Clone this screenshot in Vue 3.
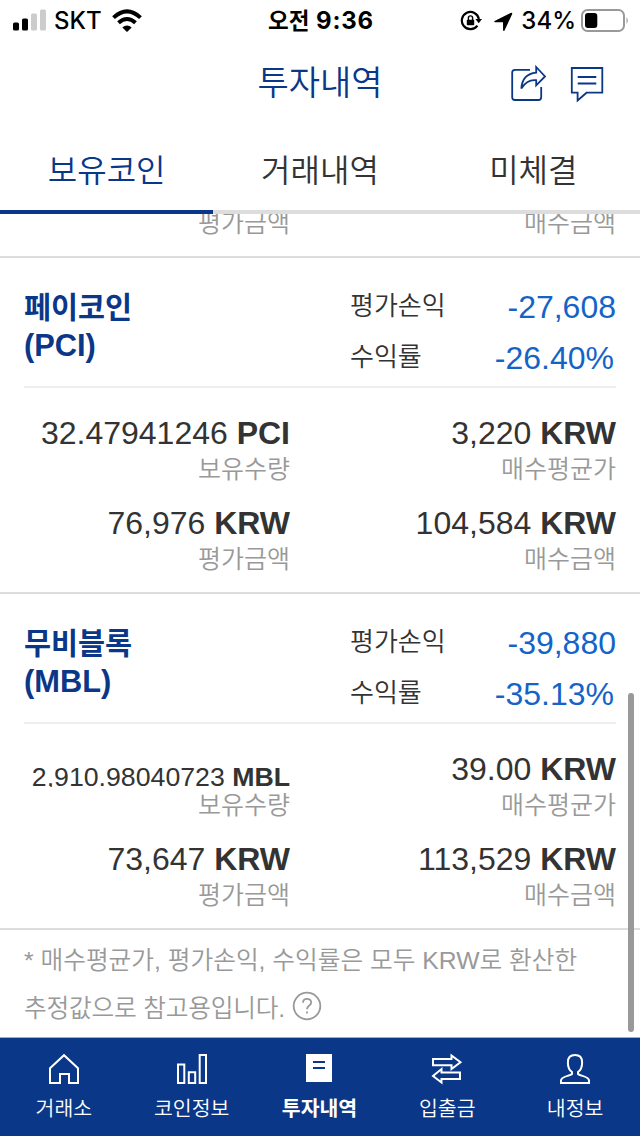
<template>
  <div class="app">
    <div class="status">
      <div class="status-left">
        <svg width="36" height="24" viewBox="0 0 36 24">
          <rect x="0" y="13.5" width="6" height="8" rx="1.5" />
          <rect x="9" y="9.5" width="6" height="12" rx="1.5" />
          <rect class="off" x="18" y="4.5" width="6" height="17" rx="1.5" />
          <rect class="off" x="27" y="0.5" width="6" height="21" rx="1.5" />
        </svg>
        <span class="carrier">SKT</span>
        <svg class="wifi" width="30" height="24" viewBox="0 0 30 24">
          <path d="M1.5 8.6 Q15 -3.8 28.5 8.6" />
          <path d="M6.5 13.8 Q15 6.2 23.5 13.8" />
          <path class="solid" d="M15 23 L10.3 18.5 Q15 14.7 19.7 18.5 Z" />
        </svg>
      </div>
      <div class="time"><span class="ampm">오전</span> 9:36</div>
      <div class="status-right">
        <svg class="lock" width="22" height="22" viewBox="0 0 22 22">
          <path class="ring" d="M17.4 15.6 A8.6 8.6 0 1 1 18.9 9" />
          <path d="M15.4 9 H22 L18.7 13.2 Z" />
          <rect x="6.8" y="9.7" width="7.4" height="5.6" rx="0.8" />
          <path class="shackle" d="M8.4 10 V8 A2.1 2.1 0 0 1 12.6 8 V10" />
        </svg>
        <svg class="arrow" width="20" height="20" viewBox="0 0 20 20">
          <path d="M18.6 0.8 Q19.6 1 19.1 2.2 L11.4 18.8 Q10.4 19.6 10.1 18.3 L10 10.3 H2 Q0.5 10 1.6 9 L17.6 1 Z" />
        </svg>
        <span class="percent">34%</span>
        <svg class="battery" width="48" height="24" viewBox="0 0 48 24">
          <rect class="case" x="1" y="2" width="42" height="21" rx="5.5" />
          <rect x="4" y="5" width="12.3" height="15" rx="3" />
          <path class="tip" d="M45.5 9 Q48 12.5 45.5 16 Z" />
        </svg>
      </div>
    </div>

    <header class="header">
      <h1>투자내역</h1>
      <div class="actions">
        <svg width="40" height="40" viewBox="0 0 40 40">
          <path d="M22 5.8 H7 Q4.2 5.8 4.2 8.6 V33.2 Q4.2 36 7 36 H30.4 Q33.2 36 33.2 33.2 V23" />
          <path d="M28.2 3 L37 12.5 L28.2 21.3 V16.2 C21 15.4 17 18.5 13.3 24.5 C14 15 19.5 9.4 28.2 8.6 Z" />
        </svg>
        <svg width="40" height="40" viewBox="0 0 40 40">
          <path d="M3.8 4 H34.3 V28.7 H18.5 L9.6 36.5 V28.7 H3.8 Z" />
          <path d="M9.7 13 H28.3 M9.7 19.5 H28.3" />
        </svg>
      </div>
    </header>

    <nav class="tabs">
      <div
        v-for="(tab, i) in tabs"
        :key="tab"
        class="tab"
        :class="{ active: activeTab === i }"
        @click="activeTab = i"
      >
        {{ tab }}
      </div>
    </nav>

    <main class="list">
      <div class="peek">
        <div class="label">평가금액</div>
        <div class="label">매수금액</div>
      </div>

      <section v-for="coin in coins" :key="coin.symbol" class="coin">
        <div class="summary">
          <div class="name">
            {{ coin.name }}<br /><span class="symbol">({{ coin.symbol }})</span>
          </div>
          <div class="profit">
            <div class="line">
              <span>평가손익</span><strong>{{ coin.profit }}</strong>
            </div>
            <div class="line rate">
              <span>수익률</span><strong>{{ coin.rate }}</strong>
            </div>
          </div>
        </div>
        <div class="details">
          <div v-for="item in coin.items" :key="item.label">
            <div class="value" :class="{ small: item.value.length > 12 }">
              {{ item.value }} <b>{{ item.unit }}</b>
            </div>
            <div class="label">{{ item.label }}</div>
          </div>
        </div>
      </section>

      <p class="note">
        * 매수평균가, 평가손익, 수익률은 모두 KRW로 환산한<br />
        <span class="second">추정값으로 참고용입니다.</span>
        <svg width="30" height="30" viewBox="0 0 30 30">
          <circle cx="15" cy="15" r="13.3" />
          <path d="M11 11.8 C11 6.6 19.2 6.6 19.2 11.4 C19.2 14.5 15 14.6 15 18.2" />
          <path d="M15 20.6 V22.6" />
        </svg>
      </p>
      <div class="scrollbar"></div>
    </main>

    <footer class="bottom">
      <div class="menu">
        <svg width="32" height="32" viewBox="0 0 32 32">
          <path d="M2 30 V15.2 L16 2.2 L30 15.2 V30 H21 V21 H12 V30 Z" />
        </svg>
        <span>거래소</span>
      </div>
      <div class="menu">
        <svg width="32" height="32" viewBox="0 0 32 32">
          <path d="M2 11.5 H8.3 V30 H2 Z M12.8 19.3 H19.2 V30 H12.8 Z M23.7 2 H30 V30 H23.7 Z" />
        </svg>
        <span>코인정보</span>
      </div>
      <div class="menu active">
        <svg width="32" height="32" viewBox="0 0 32 32">
          <rect x="3" y="1" width="26" height="28" />
          <path d="M10 9 H22 M10 15 H22" />
        </svg>
        <span>투자내역</span>
      </div>
      <div class="menu">
        <svg width="32" height="32" viewBox="0 0 32 32">
          <path d="M2 6 H20.5 V2.4 L29.5 9.2 L20.5 16 V12.2 H2 Z" />
          <path d="M29 19.5 H10.5 V16 L2 23 L10.5 29.5 V26 H29 Z" />
        </svg>
        <span>입출금</span>
      </div>
      <div class="menu">
        <svg width="32" height="32" viewBox="0 0 32 32">
          <path d="M16 2 C5.5 2 8.5 16 13 19 V21 C11 23.2 2 23.2 2 27.5 V30 H30 V27.5 C30 23.2 21 23.2 19 21 V19 C23.5 16 26.5 2 16 2 Z" />
        </svg>
        <span>내정보</span>
      </div>
    </footer>
  </div>
</template>

<script setup>
import { ref } from 'vue'

const tabs = ['보유코인', '거래내역', '미체결']
const activeTab = ref(0)

const coins = ref([
  {
    name: '페이코인',
    symbol: 'PCI',
    profit: '-27,608',
    rate: '-26.40%',
    items: [
      { value: '32.47941246', unit: 'PCI', label: '보유수량' },
      { value: '3,220', unit: 'KRW', label: '매수평균가' },
      { value: '76,976', unit: 'KRW', label: '평가금액' },
      { value: '104,584', unit: 'KRW', label: '매수금액' }
    ]
  },
  {
    name: '무비블록',
    symbol: 'MBL',
    profit: '-39,880',
    rate: '-35.13%',
    items: [
      { value: '2,910.98040723', unit: 'MBL', label: '보유수량' },
      { value: '39.00', unit: 'KRW', label: '매수평균가' },
      { value: '73,647', unit: 'KRW', label: '평가금액' },
      { value: '113,529', unit: 'KRW', label: '매수금액' }
    ]
  }
])
</script>

<style>
body {
  margin: 0;
  background: #fff;
}
</style>

<style scoped>
.app {
  display: flex;
  flex-direction: column;
  width: 640px;
  height: 1136px;
  overflow: hidden;
  background: #fff;
  color: #333;
  font-family: 'Liberation Sans', 'Noto Sans CJK KR', sans-serif;
  font-weight: 350;
  white-space: nowrap;
}

svg {
  display: block;
  flex: none;
}

b {
  font-weight: 700;
}

.status {
  display: grid;
  grid-template-columns: 1fr auto 1fr;
  align-items: center;
  height: 40px;
  padding: 0 11px 0 13px;
  box-sizing: border-box;
  color: #000;
  font-family: Inter, 'Noto Sans CJK KR', sans-serif;
  font-size: 24px;
  font-weight: 500;
  line-height: 42px;
}

.status-left,
.status-right {
  display: flex;
  align-items: center;
  height: 40px;
}

.off {
  fill: #ccc;
}

.carrier {
  margin: 0 10px 0 5px;
}

.wifi path {
  fill: none;
  stroke: #000;
  stroke-width: 4;
}

.wifi .solid {
  fill: #000;
  stroke: none;
}

.time {
  font-weight: 700;
  letter-spacing: 0.8px;
}

.ampm {
  font-size: 22.5px;
  letter-spacing: 0;
}

.status-right {
  justify-content: flex-end;
}

.lock .ring {
  fill: none;
  stroke: #000;
  stroke-width: 2.2;
}

.shackle {
  fill: none;
  stroke: #000;
  stroke-width: 1.4;
}

.arrow {
  margin: 1px 8px 0 11px;
}

.percent {
  margin-right: 5px;
}

.battery {
  margin-bottom: 2px;
}

.case {
  fill: none;
  stroke: #999;
  stroke-width: 2;
}

.tip {
  fill: #999;
}

.header {
  position: relative;
  height: 90px;
  color: #0a3787;
}

h1 {
  margin: 0;
  font-size: 34px;
  font-weight: 350;
  line-height: 86px;
  text-align: center;
}

.actions {
  position: absolute;
  top: 24px;
  right: 32px;
  display: flex;
  gap: 20px;
}

.actions svg {
  fill: none;
  stroke: #0a3787;
  stroke-width: 1.8;
}

.tabs {
  display: flex;
  height: 84px;
}

.tab {
  flex: 1;
  height: 80px;
  border-bottom: 4px solid #ddd;
  font-size: 32px;
  line-height: 82px;
  text-align: center;
}

.tab.active {
  border-color: #0a3787;
  color: #0a3787;
}

.list {
  position: relative;
  flex: 1;
  overflow: hidden;
}

.peek {
  display: grid;
  grid-template-columns: 266px 302px;
  gap: 24px;
  height: 42px;
  padding: 0 24px;
  border-bottom: 2px solid #ddd;
  overflow: hidden;
}

.peek .label {
  margin-top: -7px;
}

.coin {
  border-bottom: 2px solid #ddd;
}

.summary {
  display: flex;
  justify-content: space-between;
  height: 128px;
  margin: 0 24px;
  border-bottom: 2px solid #eee;
}

.name {
  padding-top: 31px;
  color: #0a3787;
  font-size: 29.4px;
  font-weight: 700;
  line-height: 38px;
}

.symbol {
  font-size: 30.8px;
}

.profit {
  width: 266px;
  padding-top: 24px;
}

.line {
  display: flex;
  justify-content: space-between;
  height: 51px;
  font-size: 26px;
  line-height: 49px;
}

.line strong {
  color: #1464c8;
  font-size: 32px;
  font-weight: 400;
  line-height: 51px;
}

.rate strong {
  padding-right: 2px;
}

.details {
  display: grid;
  grid-template-columns: 266px 302px;
  gap: 18px 24px;
  padding: 25px 24px 17px;
  text-align: right;
}

.value {
  height: 40px;
  font-size: 32px;
  line-height: 40px;
}

.value.small {
  height: 38px;
  margin-bottom: 2px;
  overflow: hidden;
  font-size: 26.7px;
  line-height: 56px;
}

.label {
  color: #999;
  font-size: 25px;
  line-height: 32px;
  text-align: right;
}

.note {
  margin: 7px 24px 0;
  color: #999;
  font-size: 24.7px;
  line-height: 48px;
}

.second {
  letter-spacing: -0.2px;
}

.note svg {
  display: inline-block;
  margin-left: 7px;
  vertical-align: -4px;
  fill: none;
  stroke: #999;
  stroke-width: 1.8;
}

.scrollbar {
  position: absolute;
  top: 479px;
  right: 6px;
  width: 6px;
  height: 339px;
  border-radius: 3px;
  background: #999;
}

.bottom {
  display: flex;
  height: 98px;
  padding-right: 1px;
  border-top: 1px solid #aaa;
  background: #0a3787;
  color: #fff;
}

.menu {
  display: flex;
  flex: 1;
  flex-direction: column;
  align-items: center;
  padding-top: 15px;
  font-size: 20.5px;
  line-height: 48px;
}

.menu svg {
  fill: none;
  stroke: #fff;
  stroke-width: 2;
}

.menu.active {
  font-weight: 700;
}

.menu.active rect {
  fill: #fff;
  stroke: none;
}

.menu.active path {
  stroke: #0a3787;
}
</style>
